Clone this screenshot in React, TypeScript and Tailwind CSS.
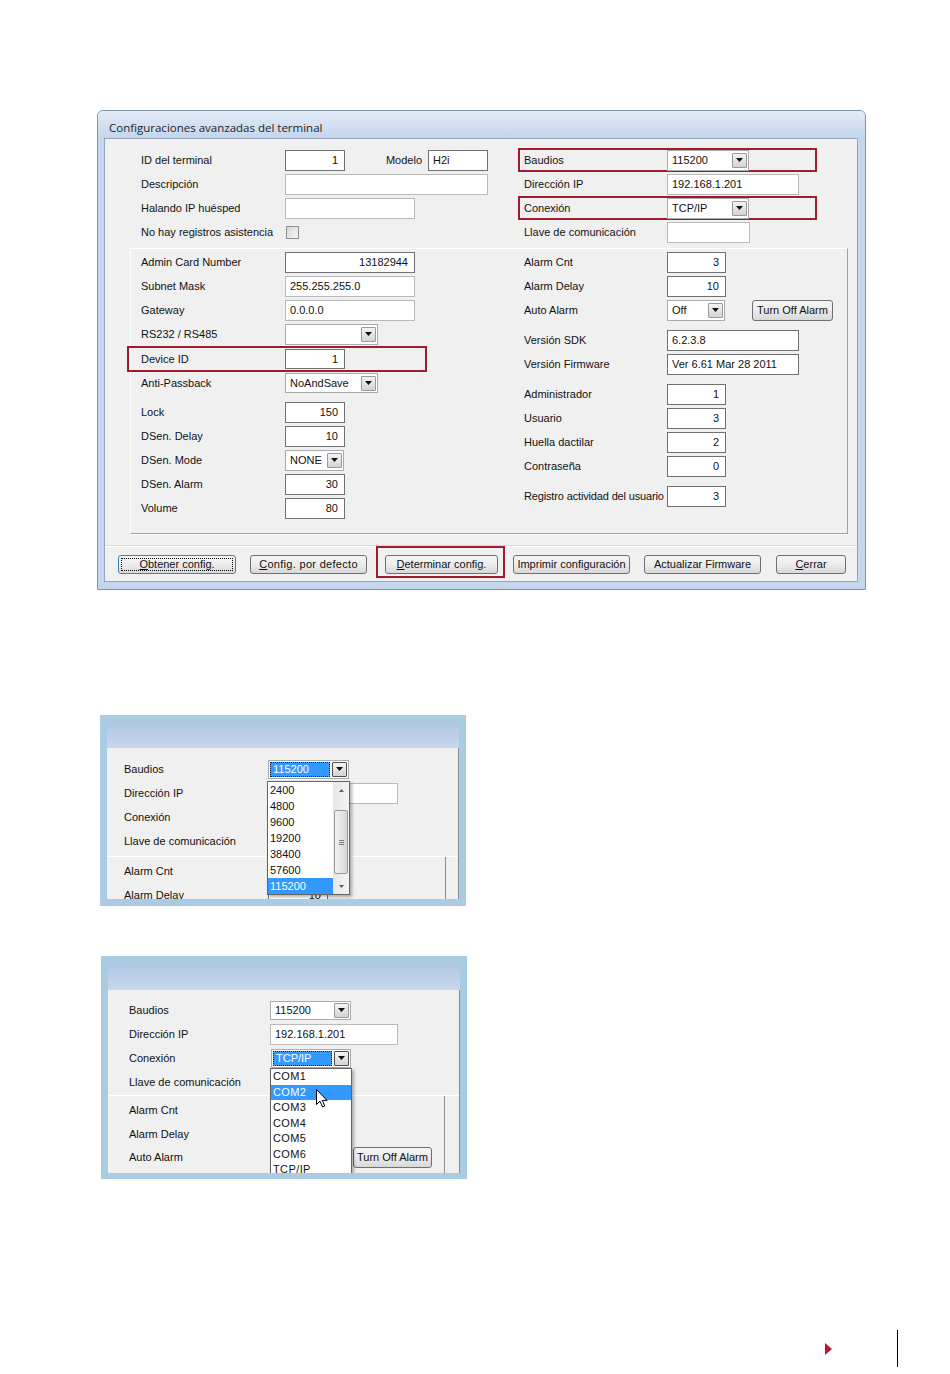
import React from "react";

const SANS = "font-['Liberation_Sans',Arial,sans-serif]";

function Arrow({ pressed = false }: { pressed?: boolean }) {
  return (
    <div
      className={`w-[15px] h-[15px] shrink-0 flex items-center justify-center border rounded-[1px] bg-linear-to-b from-[#f4f4f4] to-[#d3d3d3] ${
        pressed ? "border-[#4f4f4f]" : "border-[#9a9a9a]"
      }`}
    >
      <svg width="7" height="4" viewBox="0 0 7 4">
        <path d="M0 0H7L3.5 4Z" fill="#111" />
      </svg>
    </div>
  );
}

function Combo({
  w,
  value = "",
  h = "h-[21px]",
  selected = false,
}: {
  w: string;
  value?: string;
  h?: string;
  selected?: boolean;
}) {
  return (
    <div className={`${w} ${h} shrink-0 flex items-center bg-white border border-[#ababab] pl-[1px] pr-[1px]`}>
      {selected ? (
        <div className="flex-1 h-[15px] mr-[2px] bg-[#3399ff] text-white border border-dotted border-[#0b2350] flex items-center pl-[2px] text-[11px] leading-none">
          {value}
        </div>
      ) : (
        <span className="flex-1 pl-[3px] pt-[1px] text-[11px] leading-none whitespace-nowrap">{value}</span>
      )}
      <Arrow pressed={selected} />
    </div>
  );
}

function TextBox({
  w,
  value = "",
  right = false,
  light = false,
  h = "h-[21px]",
}: {
  w: string;
  value?: string;
  right?: boolean;
  light?: boolean;
  h?: string;
}) {
  return (
    <div
      className={`${w} ${h} shrink-0 flex items-center bg-white border pt-[1px] text-[11px] leading-none whitespace-nowrap ${
        light ? "border-[#b9b9b9]" : "border-[#707070]"
      } ${right ? "justify-end pr-[6px]" : "pl-[4px]"}`}
    >
      {value}
    </div>
  );
}

function Label({
  children,
  w = "w-[144px]",
  className = "",
}: {
  children?: React.ReactNode;
  w?: string;
  className?: string;
}) {
  return (
    <span className={`${w} shrink-0 whitespace-nowrap text-[11px] leading-none text-[#111] ${className}`}>
      {children}
    </span>
  );
}

function Row({
  children,
  h = "h-[24px]",
  className = "",
}: {
  children?: React.ReactNode;
  h?: string;
  className?: string;
}) {
  return <div className={`flex items-center shrink-0 ${h} ${className}`}>{children}</div>;
}

function Btn({
  children,
  w,
  h = "h-[19px]",
  focused = false,
  className = "",
}: {
  children: React.ReactNode;
  w: string;
  h?: string;
  focused?: boolean;
  className?: string;
}) {
  return (
    <div
      className={`${w} ${h} shrink-0 rounded-[3px] border bg-linear-to-b from-[#f5f5f5] via-[#ececec] to-[#d8d8d8] flex items-center justify-center text-[11px] leading-none whitespace-nowrap text-[#111] ${
        focused ? "border-[#3c7fb1] p-[2px]" : "border-[#707070]"
      } ${className}`}
    >
      {focused ? (
        <div className="w-full h-full border border-dotted border-black flex items-center justify-center">{children}</div>
      ) : (
        children
      )}
    </div>
  );
}

function RedRow({ children, className = "" }: { children: React.ReactNode; className?: string }) {
  return <div className={`flex items-center shrink-0 border-2 border-[#a11a2d] ${className}`}>{children}</div>;
}

function MainDialog() {
  return (
    <div className="ml-[97px] mt-[110px] w-[769px] h-[480px] shrink-0 flex flex-col rounded-t-[6px] border border-[#7f93ad] bg-[#c3d6ec]">
      <div className="h-[27px] shrink-0 flex items-end pl-[11px] pb-[5px] rounded-t-[5px] bg-linear-to-b from-[#e2ebf7] to-[#c4d6ec] font-['Open_Sans',sans-serif] text-[11.5px] leading-none text-[#1e1e1e]">
        Configuraciones avanzadas del terminal
      </div>
      <div className="ml-[6px] mr-[7px] h-[444px] shrink-0 border border-[#97a7bb] bg-[#f0f0f0] flex flex-col">
        {/* top section */}
        <div className="flex pl-[36px] pt-[9px]">
          <div className="w-[383px] shrink-0 flex flex-col">
            <Row>
              <Label>ID del terminal</Label>
              <TextBox w="w-[60px]" value="1" right />
              <span className="w-[83px] shrink-0 text-right pr-[6px] text-[11px] leading-none">Modelo</span>
              <TextBox w="w-[60px]" value="H2i" />
            </Row>
            <Row>
              <Label>Descripción</Label>
              <TextBox w="w-[203px]" light />
            </Row>
            <Row>
              <Label>Halando IP huésped</Label>
              <TextBox w="w-[130px]" light />
            </Row>
            <Row>
              <Label>No hay registros asistencia</Label>
              <div className="ml-[1px] w-[13px] h-[13px] border border-[#8e8f8f] bg-linear-to-br from-[#d6d6d6] to-[#f7f7f7]" />
            </Row>
          </div>
          <div className="flex flex-col">
            <RedRow className="-ml-[6px] w-[299px] h-[24px] pl-[4px]">
              <Label w="w-[143px]">Baudios</Label>
              <Combo w="w-[82px]" value="115200" />
            </RedRow>
            <Row>
              <Label w="w-[143px]">Dirección IP</Label>
              <TextBox w="w-[132px]" value="192.168.1.201" light />
            </Row>
            <RedRow className="-ml-[6px] w-[299px] h-[24px] pl-[4px]">
              <Label w="w-[143px]">Conexión</Label>
              <Combo w="w-[82px]" value="TCP/IP" />
            </RedRow>
            <Row>
              <Label w="w-[143px]">Llave de comunicación</Label>
              <TextBox w="w-[83px]" light />
            </Row>
          </div>
        </div>

        {/* group box */}
        <div className="ml-[25px] mt-[4px] w-[718px] h-[286px] shrink-0 flex pl-[10px] pt-[1px] border border-t-white border-l-white border-r-[#a0a0a0] border-b-[#a0a0a0] shadow-[0_1px_0_#ffffff]">
          <div className="w-[383px] shrink-0 flex flex-col">
            <Row>
              <Label>Admin Card Number</Label>
              <TextBox w="w-[130px]" value="13182944" right />
            </Row>
            <Row>
              <Label>Subnet Mask</Label>
              <TextBox w="w-[130px]" value="255.255.255.0" light />
            </Row>
            <Row>
              <Label>Gateway</Label>
              <TextBox w="w-[130px]" value="0.0.0.0" light />
            </Row>
            <Row>
              <Label>RS232 / RS485</Label>
              <Combo w="w-[93px]" />
            </Row>
            <RedRow className="-ml-[14px] w-[300px] h-[26px] pl-[12px]">
              <Label>Device ID</Label>
              <TextBox w="w-[60px]" value="1" right h="h-[20px]" />
            </RedRow>
            <Row h="h-[22px]">
              <Label>Anti-Passback</Label>
              <Combo w="w-[93px]" value="NoAndSave" h="h-[20px]" />
            </Row>
            <Row className="mt-[6px]">
              <Label>Lock</Label>
              <TextBox w="w-[60px]" value="150" right />
            </Row>
            <Row>
              <Label>DSen. Delay</Label>
              <TextBox w="w-[60px]" value="10" right />
            </Row>
            <Row>
              <Label>DSen. Mode</Label>
              <Combo w="w-[59px]" value="NONE" />
            </Row>
            <Row>
              <Label>DSen. Alarm</Label>
              <TextBox w="w-[60px]" value="30" right />
            </Row>
            <Row>
              <Label>Volume</Label>
              <TextBox w="w-[60px]" value="80" right />
            </Row>
          </div>
          <div className="flex flex-col">
            <Row>
              <Label w="w-[143px]">Alarm Cnt</Label>
              <TextBox w="w-[59px]" value="3" right />
            </Row>
            <Row>
              <Label w="w-[143px]">Alarm Delay</Label>
              <TextBox w="w-[59px]" value="10" right />
            </Row>
            <Row>
              <Label w="w-[143px]">Auto Alarm</Label>
              <Combo w="w-[58px]" value="Off" />
              <Btn w="w-[81px]" h="h-[21px]" className="ml-[27px]">
                Turn Off Alarm
              </Btn>
            </Row>
            <Row className="mt-[6px]">
              <Label w="w-[143px]">Versión SDK</Label>
              <TextBox w="w-[132px]" value="6.2.3.8" />
            </Row>
            <Row>
              <Label w="w-[143px]">Versión Firmware</Label>
              <TextBox w="w-[132px]" value="Ver 6.61 Mar 28 2011" />
            </Row>
            <Row className="mt-[6px]">
              <Label w="w-[143px]">Administrador</Label>
              <TextBox w="w-[59px]" value="1" right />
            </Row>
            <Row>
              <Label w="w-[143px]">Usuario</Label>
              <TextBox w="w-[59px]" value="3" right />
            </Row>
            <Row>
              <Label w="w-[143px]">Huella dactilar</Label>
              <TextBox w="w-[59px]" value="2" right />
            </Row>
            <Row>
              <Label w="w-[143px]">Contraseña</Label>
              <TextBox w="w-[59px]" value="0" right />
            </Row>
            <Row className="mt-[6px]">
              <Label w="w-[143px]" className="tracking-[-0.15px]">
                Registro actividad del usuario
              </Label>
              <TextBox w="w-[59px]" value="3" right />
            </Row>
          </div>
        </div>

        {/* separator + buttons */}
        <div className="mt-[11px] h-px shrink-0 bg-[#d9d9d9] shadow-[0_1px_0_#ffffff]" />
        <div className="flex items-start h-[35px] shrink-0">
          <Btn w="w-[118px]" focused className="ml-[13px] mt-[9px]">
            <span>
              <span className="underline">O</span>btener config.
            </span>
          </Btn>
          <Btn w="w-[117px]" className="ml-[14px] mt-[9px] tracking-[0.3px]">
            <span>
              <span className="underline">C</span>onfig. por defecto
            </span>
          </Btn>
          <div className="ml-[9px] w-[129px] h-[32px] shrink-0 border-2 border-[#a11a2d] pl-[7px] pt-[7px]">
            <Btn w="w-[113px]">
              <span>
                <span className="underline">D</span>eterminar config.
              </span>
            </Btn>
          </div>
          <Btn w="w-[117px]" className="ml-[8px] mt-[9px]">
            Imprimir configuración
          </Btn>
          <Btn w="w-[117px]" className="ml-[14px] mt-[9px]">
            Actualizar Firmware
          </Btn>
          <Btn w="w-[70px]" className="ml-[15px] mt-[9px]">
            <span>
              <span className="underline">C</span>errar
            </span>
          </Btn>
        </div>
      </div>
    </div>
  );
}

function ScrollBar() {
  return (
    <div className="w-[16px] shrink-0 flex flex-col bg-linear-to-r from-[#e6e6e6] to-[#f5f5f5]">
      <div className="h-[16px] shrink-0 flex items-center justify-center">
        <svg width="5" height="3" viewBox="0 0 5 3">
          <path d="M0 3L2.5 0L5 3Z" fill="#5f5f5f" />
        </svg>
      </div>
      <div className="flex-1 pt-[12px] px-[1px]">
        <div className="h-[64px] rounded-[2px] border border-[#989898] bg-linear-to-r from-[#f3f3f3] to-[#d6d6d6] flex flex-col items-center justify-center gap-[1px]">
          <div className="w-[5px] h-px bg-[#7a7a7a]" />
          <div className="w-[5px] h-px bg-[#7a7a7a]" />
          <div className="w-[5px] h-px bg-[#7a7a7a]" />
        </div>
      </div>
      <div className="h-[16px] shrink-0 flex items-center justify-center">
        <svg width="5" height="3" viewBox="0 0 5 3">
          <path d="M0 0L2.5 3L5 0Z" fill="#5f5f5f" />
        </svg>
      </div>
    </div>
  );
}

const BAUDS = ["2400", "4800", "9600", "19200", "38400", "57600", "115200"];
const PORTS = ["COM1", "COM2", "COM3", "COM4", "COM5", "COM6", "TCP/IP"];

function BaudWindow() {
  return (
    <div className="ml-[100px] mt-[125px] w-[366px] h-[191px] shrink-0 p-[7px] bg-[#a9cce2]">
      <div className="h-[26px] bg-linear-to-b from-[#b0c6e3] to-[#c8d7ec]" />
      <div className="relative h-[151px] overflow-hidden bg-[#f0f0f0] border-r border-[#8c8c8c] flex flex-col">
        <div className="flex flex-col pl-[17px] pt-[9px]">
          <Row>
            <Label>Baudios</Label>
            <Combo w="w-[81px]" h="h-[19px]" value="115200" selected />
          </Row>
          <Row>
            <Label>Dirección IP</Label>
            <TextBox w="w-[130px]" light />
          </Row>
          <Row>
            <Label>Conexión</Label>
          </Row>
          <Row>
            <Label>Llave de comunicación</Label>
          </Row>
        </div>
        <div className="mt-[3px] h-px shrink-0 bg-white" />
        <div className="w-[339px] flex-1 border-r border-[#8f8f8f] pl-[17px] pt-[2px] flex flex-col">
          <Row>
            <Label>Alarm Cnt</Label>
            <TextBox w="w-[60px]" value="3" right />
          </Row>
          <Row>
            <Label>Alarm Delay</Label>
            <TextBox w="w-[60px]" value="10" right />
          </Row>
        </div>
        <div className="absolute left-[160px] top-[33px] w-[83px] h-[114px] bg-white border border-[#646464] shadow-[2px_2px_3px_rgba(0,0,0,0.3)] flex">
          <div className="w-[65px] shrink-0 flex flex-col">
            {BAUDS.map((b) => (
              <div
                key={b}
                className={`h-[16px] shrink-0 pl-[2px] flex items-center text-[11px] leading-none ${
                  b === "115200" ? "bg-[#3399ff] text-white" : "text-[#111]"
                }`}
              >
                {b}
              </div>
            ))}
          </div>
          <ScrollBar />
        </div>
      </div>
    </div>
  );
}

function ConnWindow() {
  return (
    <div className="ml-[101px] mt-[50px] w-[366px] h-[223px] shrink-0 p-[7px] bg-[#a9cce2]">
      <div className="h-[27px] bg-linear-to-b from-[#b0c6e3] to-[#c8d7ec]" />
      <div className="relative h-[183px] overflow-hidden bg-[#f0f0f0] border-r border-[#8c8c8c] flex flex-col">
        <div className="flex flex-col pl-[21px] pt-[8px]">
          <Row>
            <Label w="w-[141px]">Baudios</Label>
            <Combo w="w-[81px]" h="h-[19px]" value="115200" />
          </Row>
          <Row>
            <Label w="w-[141px]">Dirección IP</Label>
            <TextBox w="w-[128px]" value="192.168.1.201" light />
          </Row>
          <Row>
            <Label w="w-[141px]">Conexión</Label>
            <div className="ml-[1px]">
              <Combo w="w-[80px]" h="h-[19px]" value="TCP/IP" selected />
            </div>
          </Row>
          <Row>
            <Label w="w-[141px]">Llave de comunicación</Label>
          </Row>
        </div>
        <div className="mt-[1px] h-px shrink-0 bg-white" />
        <div className="w-[337px] flex-1 border-r border-[#8f8f8f] pl-[21px] pt-[2px] flex flex-col">
          <Row>
            <Label w="w-[141px]">Alarm Cnt</Label>
          </Row>
          <Row>
            <Label w="w-[141px]" className="text-[10px]">
              Alarm Delay
            </Label>
          </Row>
          <Row h="h-[22px]">
            <Label w="w-[141px]">Auto Alarm</Label>
            <div className="w-[83px] shrink-0" />
            <Btn w="w-[79px]" h="h-[21px]">
              Turn Off Alarm
            </Btn>
          </Row>
        </div>
        <div className="absolute left-[162px] top-[78px] w-[82px] h-[112px] bg-white border border-[#646464] shadow-[2px_2px_3px_rgba(0,0,0,0.3)] flex flex-col">
          {PORTS.map((p) => (
            <div
              key={p}
              className={`h-[15.5px] shrink-0 pl-[2px] flex items-center text-[11px] leading-none tracking-[0.4px] ${
                p === "COM2" ? "bg-[#3399ff] text-white" : "text-[#111]"
              }`}
            >
              {p}
            </div>
          ))}
        </div>
        <svg
          className="absolute left-[208px] top-[99px]"
          width="12"
          height="19"
          viewBox="0 0 12 19"
        >
          <path
            d="M0.5 0.5V15.5L4 12.2L6.6 18L8.8 17L6.3 11.4H11Z"
            fill="#fff"
            stroke="#000"
            strokeWidth="1"
            strokeLinejoin="round"
          />
        </svg>
      </div>
    </div>
  );
}

function PageMark() {
  return (
    <div className="mt-[151px] h-[37px] shrink-0 flex items-start">
      <div className="ml-[825px] mt-[13px] w-0 h-0 border-y-[6px] border-y-transparent border-l-[7px] border-l-[#b5172c]" />
      <div className="ml-[65px] w-px h-[37px] bg-black" />
    </div>
  );
}

export default function App() {
  return (
    <div className={`w-[950px] h-[1374px] bg-white overflow-hidden flex flex-col items-start ${SANS} text-[#111]`}>
      <MainDialog />
      <BaudWindow />
      <ConnWindow />
      <PageMark />
    </div>
  );
}
